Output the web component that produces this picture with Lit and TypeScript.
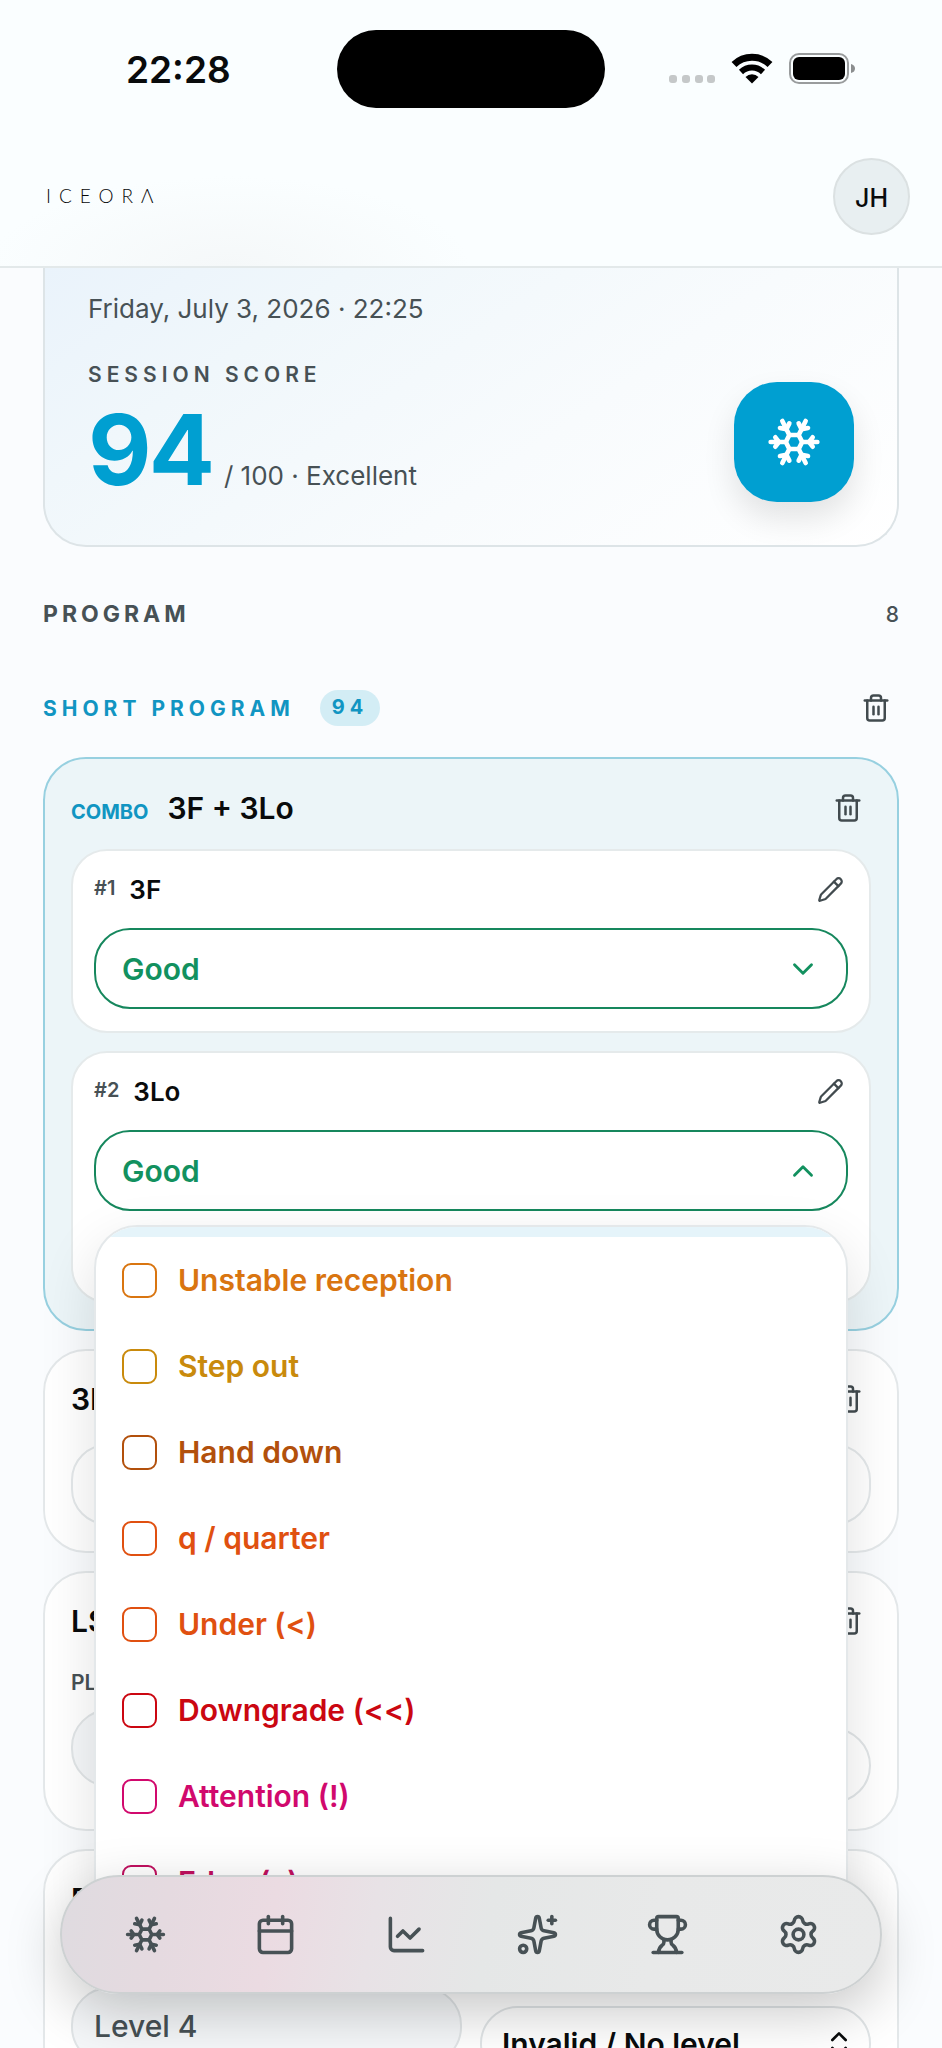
import { LitElement, html, css, svg } from "lit";
import { customElement, property, state } from "lit/decorators.js";
import { styleMap } from "lit/directives/style-map.js";

const ICONS: Record<string, unknown> = {
  snowflake: svg`<path d="m10 20-1.25-2.5L6 18"/><path d="M10 4 8.75 6.5 6 6"/><path d="m14 20 1.25-2.5L18 18"/><path d="m14 4 1.25 2.5L18 6"/><path d="m17 21-3-6h-4"/><path d="m17 3-3 6 1.5 3"/><path d="M2 12h6.5L10 9"/><path d="m20 10-1.5 2 1.5 2"/><path d="M22 12h-6.5L14 15"/><path d="m4 10 1.5 2L4 14"/><path d="m7 21 3-6-1.5-3"/><path d="m7 3 3 6h4"/>`,
  trash: svg`<path d="M10 11v6"/><path d="M14 11v6"/><path d="M19 6v14a2 2 0 0 1-2 2H7a2 2 0 0 1-2-2V6"/><path d="M3 6h18"/><path d="M8 6V4a2 2 0 0 1 2-2h4a2 2 0 0 1 2 2v2"/>`,
  pencil: svg`<path d="M21.174 6.812a1 1 0 0 0-3.986-3.987L3.842 16.174a2 2 0 0 0-.5.83l-1.321 4.352a.5.5 0 0 0 .623.622l4.353-1.32a2 2 0 0 0 .83-.497z"/><path d="m15 5 4 4"/>`,
  down: svg`<path d="m6 9 6 6 6-6"/>`,
  up: svg`<path d="m18 15-6-6-6 6"/>`,
  updown: svg`<path d="m7 15 5 5 5-5"/><path d="m7 9 5-5 5 5"/>`,
  calendar: svg`<path d="M8 2v4"/><path d="M16 2v4"/><rect width="18" height="18" x="3" y="4" rx="2"/><path d="M3 10h18"/>`,
  chart: svg`<path d="M3 3v16a2 2 0 0 0 2 2h16"/><path d="m19 9-5 5-4-4-3 3"/>`,
  sparkles: svg`<path d="M11.017 2.814a1 1 0 0 1 1.966 0l1.051 5.558a2 2 0 0 0 1.594 1.594l5.558 1.051a1 1 0 0 1 0 1.966l-5.558 1.051a2 2 0 0 0-1.594 1.594l-1.051 5.558a1 1 0 0 1-1.966 0l-1.051-5.558a2 2 0 0 0-1.594-1.594l-5.558-1.051a1 1 0 0 1 0-1.966l5.558-1.051a2 2 0 0 0 1.594-1.594z"/><path d="M20 2v4"/><path d="M22 4h-4"/><circle cx="4" cy="20" r="2"/>`,
  trophy: svg`<path d="M10 14.66v1.626a2 2 0 0 1-.976 1.696A5 5 0 0 0 7 21.978"/><path d="M14 14.66v1.626a2 2 0 0 0 .976 1.696A5 5 0 0 1 17 21.978"/><path d="M18 9h1.5a1 1 0 0 0 0-5H18"/><path d="M4 22h16"/><path d="M6 9a6 6 0 0 0 12 0V3a1 1 0 0 0-1-1H7a1 1 0 0 0-1 1z"/><path d="M6 9H4.5a1 1 0 0 1 0-5H6"/>`,
  settings: svg`<path d="M9.671 4.136a2.34 2.34 0 0 1 4.659 0 2.34 2.34 0 0 0 3.319 1.915 2.34 2.34 0 0 1 2.33 4.033 2.34 2.34 0 0 0 0 3.831 2.34 2.34 0 0 1-2.33 4.033 2.34 2.34 0 0 0-3.319 1.915 2.34 2.34 0 0 1-4.659 0 2.34 2.34 0 0 0-3.32-1.915 2.34 2.34 0 0 1-2.33-4.033 2.34 2.34 0 0 0 0-3.831A2.34 2.34 0 0 1 6.35 6.051a2.34 2.34 0 0 0 3.319-1.915"/><circle cx="12" cy="12" r="3"/>`,
};

@customElement("ui-icon")
class UiIcon extends LitElement {
  @property() name = "";
  @property({ type: Number }) size = 30;

  static styles = css`
    :host { display: block; flex: none; }
    svg { display: block; fill: none; stroke: currentColor; stroke-width: 2; stroke-linecap: round; stroke-linejoin: round; }
  `;

  render() {
    return html`<svg width=${this.size} height=${this.size} viewBox="0 0 24 24" aria-hidden="true">${ICONS[this.name]}</svg>`;
  }
}

const FLAWS = [
  { label: "Unstable reception", color: "#d97510" },
  { label: "Step out", color: "#c98a0c" },
  { label: "Hand down", color: "#b2500c" },
  { label: "q / quarter", color: "#e05010" },
  { label: "Under (<)", color: "#e05010" },
  { label: "Downgrade (<<)", color: "#cb0711" },
  { label: "Attention (!)", color: "#d1096d" },
  { label: "Edge (e)", color: "#c0105f" },
];

const TABS = [
  { icon: "snowflake", label: "Sessions" },
  { icon: "calendar", label: "Calendar" },
  { icon: "chart", label: "Statistics" },
  { icon: "sparkles", label: "Insights" },
  { icon: "trophy", label: "Competitions" },
  { icon: "settings", label: "Settings" },
];

@customElement("app-root")
class AppRoot extends LitElement {
  @state() private open = 2;

  static styles = css`
    :host {
      display: flex; flex-direction: column; position: relative; height: 100vh; overflow: hidden;
      background: #fafcfe; color: #090b0c; font-family: Inter, sans-serif;
    }
    * { box-sizing: border-box; }
    button { font: inherit; color: inherit; background: none; border: 0; padding: 0; margin: 0; cursor: pointer; }
    h1, h2, h3, p { margin: 0; font: inherit; }

    .top {
      flex: none; border-bottom: 2px solid #e3e9ea;
      background: radial-gradient(240px 90px at 230px 100%, #f5f8f9, #f5f8f900), #fafeff;
    }
    .status { display: grid; grid-template-columns: 1fr auto 1fr; align-items: center; padding-top: 30px; }
    .time { padding: 2px 0 0 126px; font-size: 37px; font-weight: 600; line-height: 48px; }
    .island { width: 268px; height: 78px; border-radius: 39px; background: #000; }
    .signals { display: flex; justify-content: flex-end; padding-right: 87px; }
    .bar { display: flex; justify-content: space-between; align-items: center; padding: 50px 32px 31px 46px; }
    .logo { padding-bottom: 2px; font-family: Lato, sans-serif; font-size: 19px; font-weight: 300; line-height: 24px; letter-spacing: 8px; color: #070809; text-decoration: none; }
    .avatar {
      width: 77px; height: 77px; border-radius: 50%; border: 2px solid #dbe1e2; background: #e8eff1;
      font-size: 25px; font-weight: 500; line-height: 32px; padding-top: 2px;
    }

    main { padding: 0 43px; min-height: 0; flex: 1; }
    .score {
      display: flex; justify-content: space-between; align-items: flex-end; padding: 21px 43px 43px;
      border: 2px solid #dde4e7; border-top: 0; border-radius: 0 0 43px 43px;
      background: linear-gradient(145deg, #eaf3fb 0%, #f0f7fb 25%, #f8fbfd 60%, #ffffff 100%);
    }
    .date { font-size: 26px; line-height: 40px; color: #475155; }
    .caption { margin-top: 30px; font-size: 21px; font-weight: 600; line-height: 32px; letter-spacing: 5px; color: #475155; }
    .result { display: flex; align-items: baseline; gap: 12px; margin-top: 7px; }
    .points { font-size: 98px; font-weight: 700; line-height: 104px; letter-spacing: -3px; color: #009fd1; }
    .verdict { font-size: 26px; color: #475155; }
    .emblem {
      display: grid; place-items: center; width: 120px; height: 120px; border-radius: 43px;
      background: #009fd1; color: #fff; box-shadow: 0 16px 32px #0000001c;
    }

    .row { display: flex; align-items: center; justify-content: space-between; }
    .program { align-items: baseline; margin-top: 51px; color: #475155; line-height: 32px; font-size: 21px; font-weight: 500; }
    .program-title { font-size: 23px; font-weight: 700; letter-spacing: 4px; }
    .segment { margin-top: 45px; height: 64px; }
    .segment-name { display: flex; align-items: center; gap: 25px; font-size: 21px; font-weight: 700; letter-spacing: 5px; color: #1195c2; }
    .pill { padding: 0 12px 2px; border-radius: 18px; background: #d3edf5; font-size: 20px; line-height: 34px; }
    .tool { display: grid; place-items: center; width: 46px; height: 46px; color: #424b4f; }
    .tool.small { width: 36px; height: 44px; }

    .list { display: grid; gap: 18px; margin-top: 17px; }
    .card { padding: 25px 26px 26px; border: 2px solid #e4e8ea; border-radius: 43px; background: #fff; }
    .combo { padding-top: 26px; border-color: #97d0e0; background: #ecf5f8; }
    .title { font-size: 30px; font-weight: 600; line-height: 46px; }
    .name { display: flex; align-items: baseline; gap: 19px; }
    .tag { font-size: 20px; font-weight: 700; color: #1195c2; }
    .jump { margin-top: 18px; padding: 16px 21px 22px; border: 2px solid #e5eaeb; border-radius: 36px; background: #fff; }
    .jump.active { padding-bottom: 90px; }
    .jump-name { display: flex; align-items: center; gap: 14px; font-size: 26px; font-weight: 600; }
    .num { padding-bottom: 3px; font-size: 20px; font-weight: 600; color: #475155; }
    .grade { position: relative; margin-top: 17px; }
    .picker {
      display: flex; align-items: center; justify-content: space-between; width: 100%; height: 81px; padding: 0 26px;
      border: 2px solid #16875d; border-radius: 36px; background: #fff; color: #12915f; font-size: 30px; font-weight: 600;
    }
    .picker.plain { margin-top: 22px; border-color: #e4e8ea; color: #424b4f; }

    .menu {
      position: absolute; z-index: 2; top: calc(100% + 14px); left: 0; right: 0; overflow: hidden;
      border: 2px solid #e4e8ea; border-radius: 43px; background: #fff; box-shadow: 0 20px 56px #0000001f;
    }
    .chosen { height: 10px; background: #e5f4fa; }
    .option { display: flex; align-items: center; gap: 21px; height: 86px; padding: 0 26px; font-size: 30px; font-weight: 600; }
    .option input { appearance: none; flex: none; width: 35px; height: 35px; margin: 0; color: inherit; border: 2px solid currentColor; border-radius: 9px; background: #fff; }
    .option input:checked { background: currentColor; }

    .pair { display: grid; grid-template-columns: 1fr 1fr; gap: 18px; margin-top: 26px; align-items: start; }
    .field { display: grid; gap: 13px; }
    .field.pick { gap: 32px; }
    .label { font-size: 21px; font-weight: 600; line-height: 26px; color: #475155; }
    .box {
      display: block; width: 100%; height: 75px; padding: 0 20px; border: 2px solid #e1e5e7; border-radius: 38px;
      background: #fff; color: #090b0c; font: 600 30px Inter, sans-serif; appearance: none;
    }
    .box.fixed { height: 78px; padding: 0 21px; background: #f5f7f9; color: #475155; font-weight: 500; }
    .choice { display: grid; align-items: center; }
    .choice > * { grid-area: 1 / 1; }
    .choice ui-icon { justify-self: end; margin-right: 16px; pointer-events: none; }

    .tabs {
      position: absolute; z-index: 3; left: 60px; right: 60px; bottom: 54px; display: grid; grid-template-columns: repeat(6, 1fr);
      height: 119px; padding: 0 16px 0 18px; border: 2px solid #cdd1d2; border-radius: 60px; color: #475155;
      background: linear-gradient(100deg, #dfdbe0 0%, #e5dae0 13%, #ebdbe2 26%, #e8e2e6 38%, #e5e7e7 52%, #e8e9e9 72%, #e9eaea 100%);
      box-shadow: 0 18px 56px #00000038;
    }
    .tab { display: grid; place-items: center; color: inherit; }
  `;

  private bin() {
    return html`<button class="tool" aria-label="Delete"><ui-icon name="trash" size="30"></ui-icon></button>`;
  }

  private jump(index: number, name: string) {
    const open = this.open === index;
    return html`
      <section class="jump ${index === 2 ? "active" : ""}">
        <div class="row">
          <div class="jump-name"><span class="num">#${index}</span><span>${name}</span></div>
          <button class="tool small" aria-label="Edit ${name}"><ui-icon name="pencil" size="27"></ui-icon></button>
        </div>
        <div class="grade">
          <button class="picker" aria-haspopup="true" aria-expanded=${open ? "true" : "false"} @click=${() => (this.open = open ? 0 : index)}>
            <span>Good</span><ui-icon name=${open ? "up" : "down"} size="34"></ui-icon>
          </button>
          ${open
            ? html`<div class="menu" role="group" aria-label="Execution">
                <div class="chosen"></div>
                ${FLAWS.map(
                  (f) => html`<label class="option" style=${styleMap({ color: f.color })}><input type="checkbox" /><span>${f.label}</span></label>`
                )}
              </div>`
            : ""}
        </div>
      </section>
    `;
  }

  private levelCard(id: string, name: string) {
    return html`
      <article class="card">
        <div class="row"><h3 class="title">${name}</h3>${this.bin()}</div>
        <div class="pair">
          <div class="field">
            <label class="label" for="${id}-plan">PLANNED</label>
            <input class="box fixed" id="${id}-plan" value="Level 4" readonly />
          </div>
          <div class="field pick">
            <label class="label" for="${id}-done">ACHIEVED</label>
            <div class="choice">
              <select class="box" id="${id}-done"><option>Invalid / No level</option></select>
              <ui-icon name="updown" size="32"></ui-icon>
            </div>
          </div>
        </div>
      </article>
    `;
  }

  render() {
    return html`
      <header class="top">
        <div class="status">
          <span class="time">22:28</span>
          <span class="island"></span>
          <span class="signals">
            <svg width="188" height="32" viewBox="0 0 188 32" aria-hidden="true">
              <g fill="#c5c8c9">
                <rect x="2" y="22" width="8" height="8" rx="3" /><rect x="15" y="22" width="8" height="8" rx="3" />
                <rect x="28" y="22" width="8" height="8" rx="3" /><rect x="40" y="22" width="8" height="8" rx="3" />
              </g>
              <g fill="none" stroke="#000" stroke-width="7">
                <path d="M67 11.500a26 26 0 0 1 36 0" />
                <path d="M74 19a16 16 0 0 1 22 0" stroke-width="6" />
              </g>
              <path d="M85 30.500l-6.500-6.500a9 9 0 0 1 13 0z" fill="#000" />
              <rect x="123" y="1" width="58" height="29" rx="9" fill="none" stroke="#999c9d" stroke-width="2" />
              <rect x="126" y="4" width="52" height="23" rx="6" fill="#000" />
              <path d="M184 11q4 1 4 4.500t-4 4.500z" fill="#8b8e8f" />
            </svg>
          </span>
        </div>
        <div class="bar">
          <a class="logo" href="#" aria-label="Iceora home">ICEORΛ</a>
          <button class="avatar">JH</button>
        </div>
      </header>

      <main>
        <section class="score">
          <div>
            <p class="date">Friday, July 3, 2026 · 22:25</p>
            <p class="caption">SESSION SCORE</p>
            <div class="result"><span class="points">94</span><span class="verdict">/ 100 · Excellent</span></div>
          </div>
          <div class="emblem"><ui-icon name="snowflake" size="56"></ui-icon></div>
        </section>

        <div class="row program"><h1 class="program-title">PROGRAM</h1><span>8</span></div>
        <div class="row segment">
          <h2 class="segment-name"><span>SHORT PROGRAM</span><span class="pill">94</span></h2>
          ${this.bin()}
        </div>

        <div class="list">
          <article class="card combo">
            <div class="row">
              <div class="name"><span class="tag">COMBO</span><h3 class="title">3F + 3Lo</h3></div>
              ${this.bin()}
            </div>
            ${this.jump(1, "3F")} ${this.jump(2, "3Lo")}
          </article>
          <article class="card">
            <div class="row"><h3 class="title">3Lz</h3>${this.bin()}</div>
            <button class="picker plain"><span>Good</span><ui-icon name="down" size="34"></ui-icon></button>
          </article>
          ${this.levelCard("lsp", "LSp")} ${this.levelCard("fcsp", "FCSp")}
        </div>
      </main>

      <nav class="tabs" aria-label="Main">
        ${TABS.map((t) => html`<a class="tab" href="#" aria-label=${t.label}><ui-icon name=${t.icon} size="43"></ui-icon></a>`)}
      </nav>
    `;
  }
}
